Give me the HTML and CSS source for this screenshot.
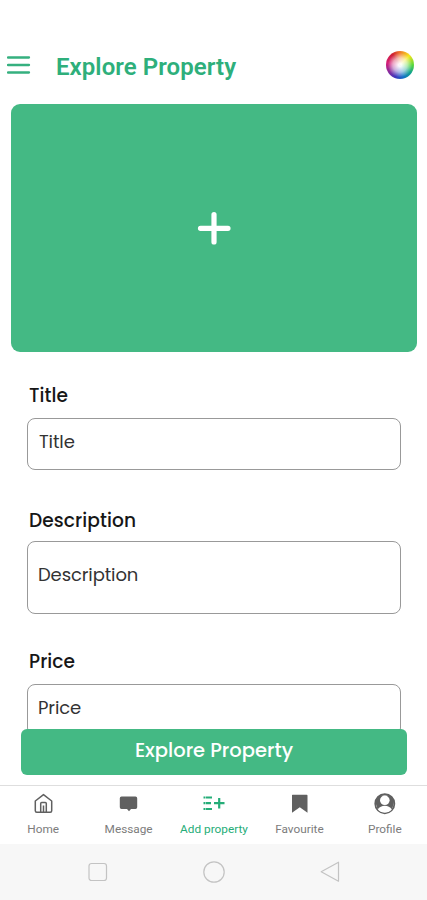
FILE: index.html
```html
<!DOCTYPE html>
<html lang="en">
<head>
<meta charset="utf-8">
<title>Explore Property</title>
<link rel="stylesheet" href="styles.css">
</head>
<body>
<div class="screen">
  <header class="topbar">
    <svg class="menu" width="24" height="20" viewBox="0 0 24 20"><path d="M1 2.500h21M1 10h21M1 17.500h21" stroke="#35b07f" stroke-width="2.300" stroke-linecap="round"/></svg>
    <h1>Explore Property</h1>
    <span class="wheel"></span>
  </header>
  <main class="content">
    <div class="upload">
      <svg width="34" height="34" viewBox="0 0 34 34"><path d="M17 3.500v27.500M3.500 17.300h27.500" stroke="#fff" stroke-width="5.200" stroke-linecap="round"/></svg>
    </div>
    <form class="form">
      <div class="label label-title">Title</div>
      <div class="field"><span class="value value-title">Title</span></div>
      <div class="label label-description">Description</div>
      <div class="field field-tall"><span class="value">Description</span></div>
      <div class="label label-price">Price</div>
      <div class="field"><span class="value">Price</span></div>
    </form>
  </main>
  <div class="action"><div class="submit"><span>Explore Property</span></div></div>
  <nav class="tabs">
    <div class="tab">
      <svg width="24" height="24" viewBox="0 0 24 24" fill="none" stroke="#606060" stroke-width="1.500" stroke-linejoin="round"><path d="M4.300 9 12.500 2.600 20.700 9v9.800q0 1.500-1.500 1.500H5.800q-1.500 0-1.500-1.500z"/><path d="M9.700 20v-8.500q0-1 1-1h3.600q1 0 1 1V20M12.500 13.500V20"/></svg>
      <span>Home</span>
    </div>
    <div class="tab">
      <svg width="24" height="24" viewBox="0 0 24 24"><path d="M5.500 4.600h14q1.700 0 1.700 1.700v9q0 1.700-1.700 1.700h-4.500L13 19.300 11 17H5.500q-1.700 0-1.700-1.700v-9Q3.800 4.600 5.500 4.600z" fill="#606060"/></svg>
      <span>Message</span>
    </div>
    <div class="tab active">
      <svg width="24" height="24" viewBox="0 0 24 24" stroke="#25ad78" fill="none" stroke-width="2.200"><path d="M2.500 5.500h2M5 5.500h6M2.500 11.200h2M5 11.200h5M2.500 17h2M5 17h6M13 11.200h10.500M18.200 6v10.400"/></svg>
      <span>Add property</span>
    </div>
    <div class="tab">
      <svg width="24" height="24" viewBox="0 0 24 24"><path d="M5.500 2.800h14.200q.8 0 .8.800V20.800l-7.700-5.500L5 20.800V3.300q0-.5.500-.5z" fill="#606060"/></svg>
      <span>Favourite</span>
    </div>
    <div class="tab">
      <svg width="24" height="24" viewBox="0 0 24 24"><circle cx="12.800" cy="11.700" r="9.600" fill="#fff" stroke="#606060" stroke-width="1.700"/><path d="M3.800 11.500Q3.300 6 8.300 3.200h9Q22.300 6 21.800 11.500L20.300 16.500 17.800 18.500Q15.800 14.700 12.800 14.700T7.800 18.500L5.300 16.500z" fill="#606060"/><circle cx="12.800" cy="8.300" r="4.800" fill="#fff"/><path d="M5.800 17.300Q8.300 13.700 12.800 13.700T19.800 17.300Q17.300 20.500 12.800 20.500T5.800 17.300z" fill="#fff"/></svg>
      <span>Profile</span>
    </div>
  </nav>
  <div class="system">
    <svg width="22" height="24" viewBox="0 0 22 24"><rect x="2" y="3.500" width="17.500" height="17" rx="2.500"/></svg>
    <svg width="24" height="24" viewBox="0 0 24 24"><circle cx="12" cy="12" r="10.200"/></svg>
    <svg width="22" height="24" viewBox="0 0 22 24"><path d="M19.500 2.200v19L2.200 11.700z"/></svg>
  </div>
</div>
</body>
</html>
```
FILE: styles.css
```css
* { box-sizing: border-box; }
body { margin: 0; background: #fff; }
.screen {
  display: flex;
  flex-direction: column;
  width: 427px;
  height: 900px;
  overflow: hidden;
  font-family: Poppins, Inter, sans-serif;
}
.topbar {
  display: flex;
  align-items: center;
  flex: none;
  height: 104px;
  padding: 26px 13px 0 7px;
}
.topbar h1 {
  margin: 3px 0 0 25px;
  font: 600 24px/28px Roboto, sans-serif;
  letter-spacing: .06px;
  color: #2eaf7b;
}
.wheel {
  width: 28px;
  height: 28px;
  margin-left: auto;
  border-radius: 50%;
  background:
    radial-gradient(circle, rgba(255,255,255,.95) 8%, rgba(255,255,255,.6) 36%, rgba(255,255,255,0) 62%),
    conic-gradient(#f07828, #f5e51b 45deg, #58d83d 90deg, #12a48c 125deg, #1270c8 165deg, #3c36bd 200deg, #8b2a9c 240deg, #d51e78 280deg, #cf1f30 325deg, #f07828);
}
.content { flex: none; height: 625px; overflow: hidden; }
.upload {
  display: flex;
  align-items: center;
  justify-content: center;
  height: 248px;
  margin: 0 10px 0 11px;
  border-radius: 9px;
  background: #44b984;
}
.form { padding: 0 26px 0 27px; }
.label {
  padding-left: 2px;
  font-size: 18.6px;
  font-weight: 500;
  line-height: 24px;
  letter-spacing: .08px;
  color: #161616;
}
.label-title { margin: 32px 0 10px; }
.label-description { margin: 39px 0 8px; }
.label-price { margin: 36px 0 10px; }
.field {
  display: flex;
  align-items: center;
  height: 52px;
  padding: 0 10px 4px;
  border: 1px solid #999;
  border-radius: 8px;
  font-size: 18px;
  line-height: 24px;
  color: #333;
}
.field-tall { height: 73px; padding-bottom: 6px; }
.value { letter-spacing: -.12px; }
.value-title { padding-left: 1px; }
.action { flex: none; height: 56px; padding: 0 20px 0 21px; }
.submit {
  display: flex;
  align-items: center;
  justify-content: center;
  height: 46px;
  padding-bottom: 3px;
  border-radius: 6px;
  background: #44b984;
  color: #fff;
  font-size: 19.5px;
  font-weight: 500;
}
.tabs {
  display: grid;
  grid-template-columns: repeat(5, 1fr);
  flex: none;
  height: 59px;
  border-top: 1px solid #dedede;
}
.tab {
  display: flex;
  flex-direction: column;
  align-items: center;
  padding-top: 6px;
  font: 400 11.8px/14px Roboto, sans-serif;
  letter-spacing: 0;
  color: #7c7c7c;
  white-space: nowrap;
}
.tab span { margin: 6px 0 0 1px; }
.tab.active { color: #25ad78; }
.system {
  display: flex;
  align-items: center;
  justify-content: space-between;
  flex: 1;
  padding: 0 86px 0 87px;
  background: #f7f7f7;
}
.system svg { fill: none; stroke: #c3c3c3; stroke-width: 1.2; stroke-linejoin: round; }
```
